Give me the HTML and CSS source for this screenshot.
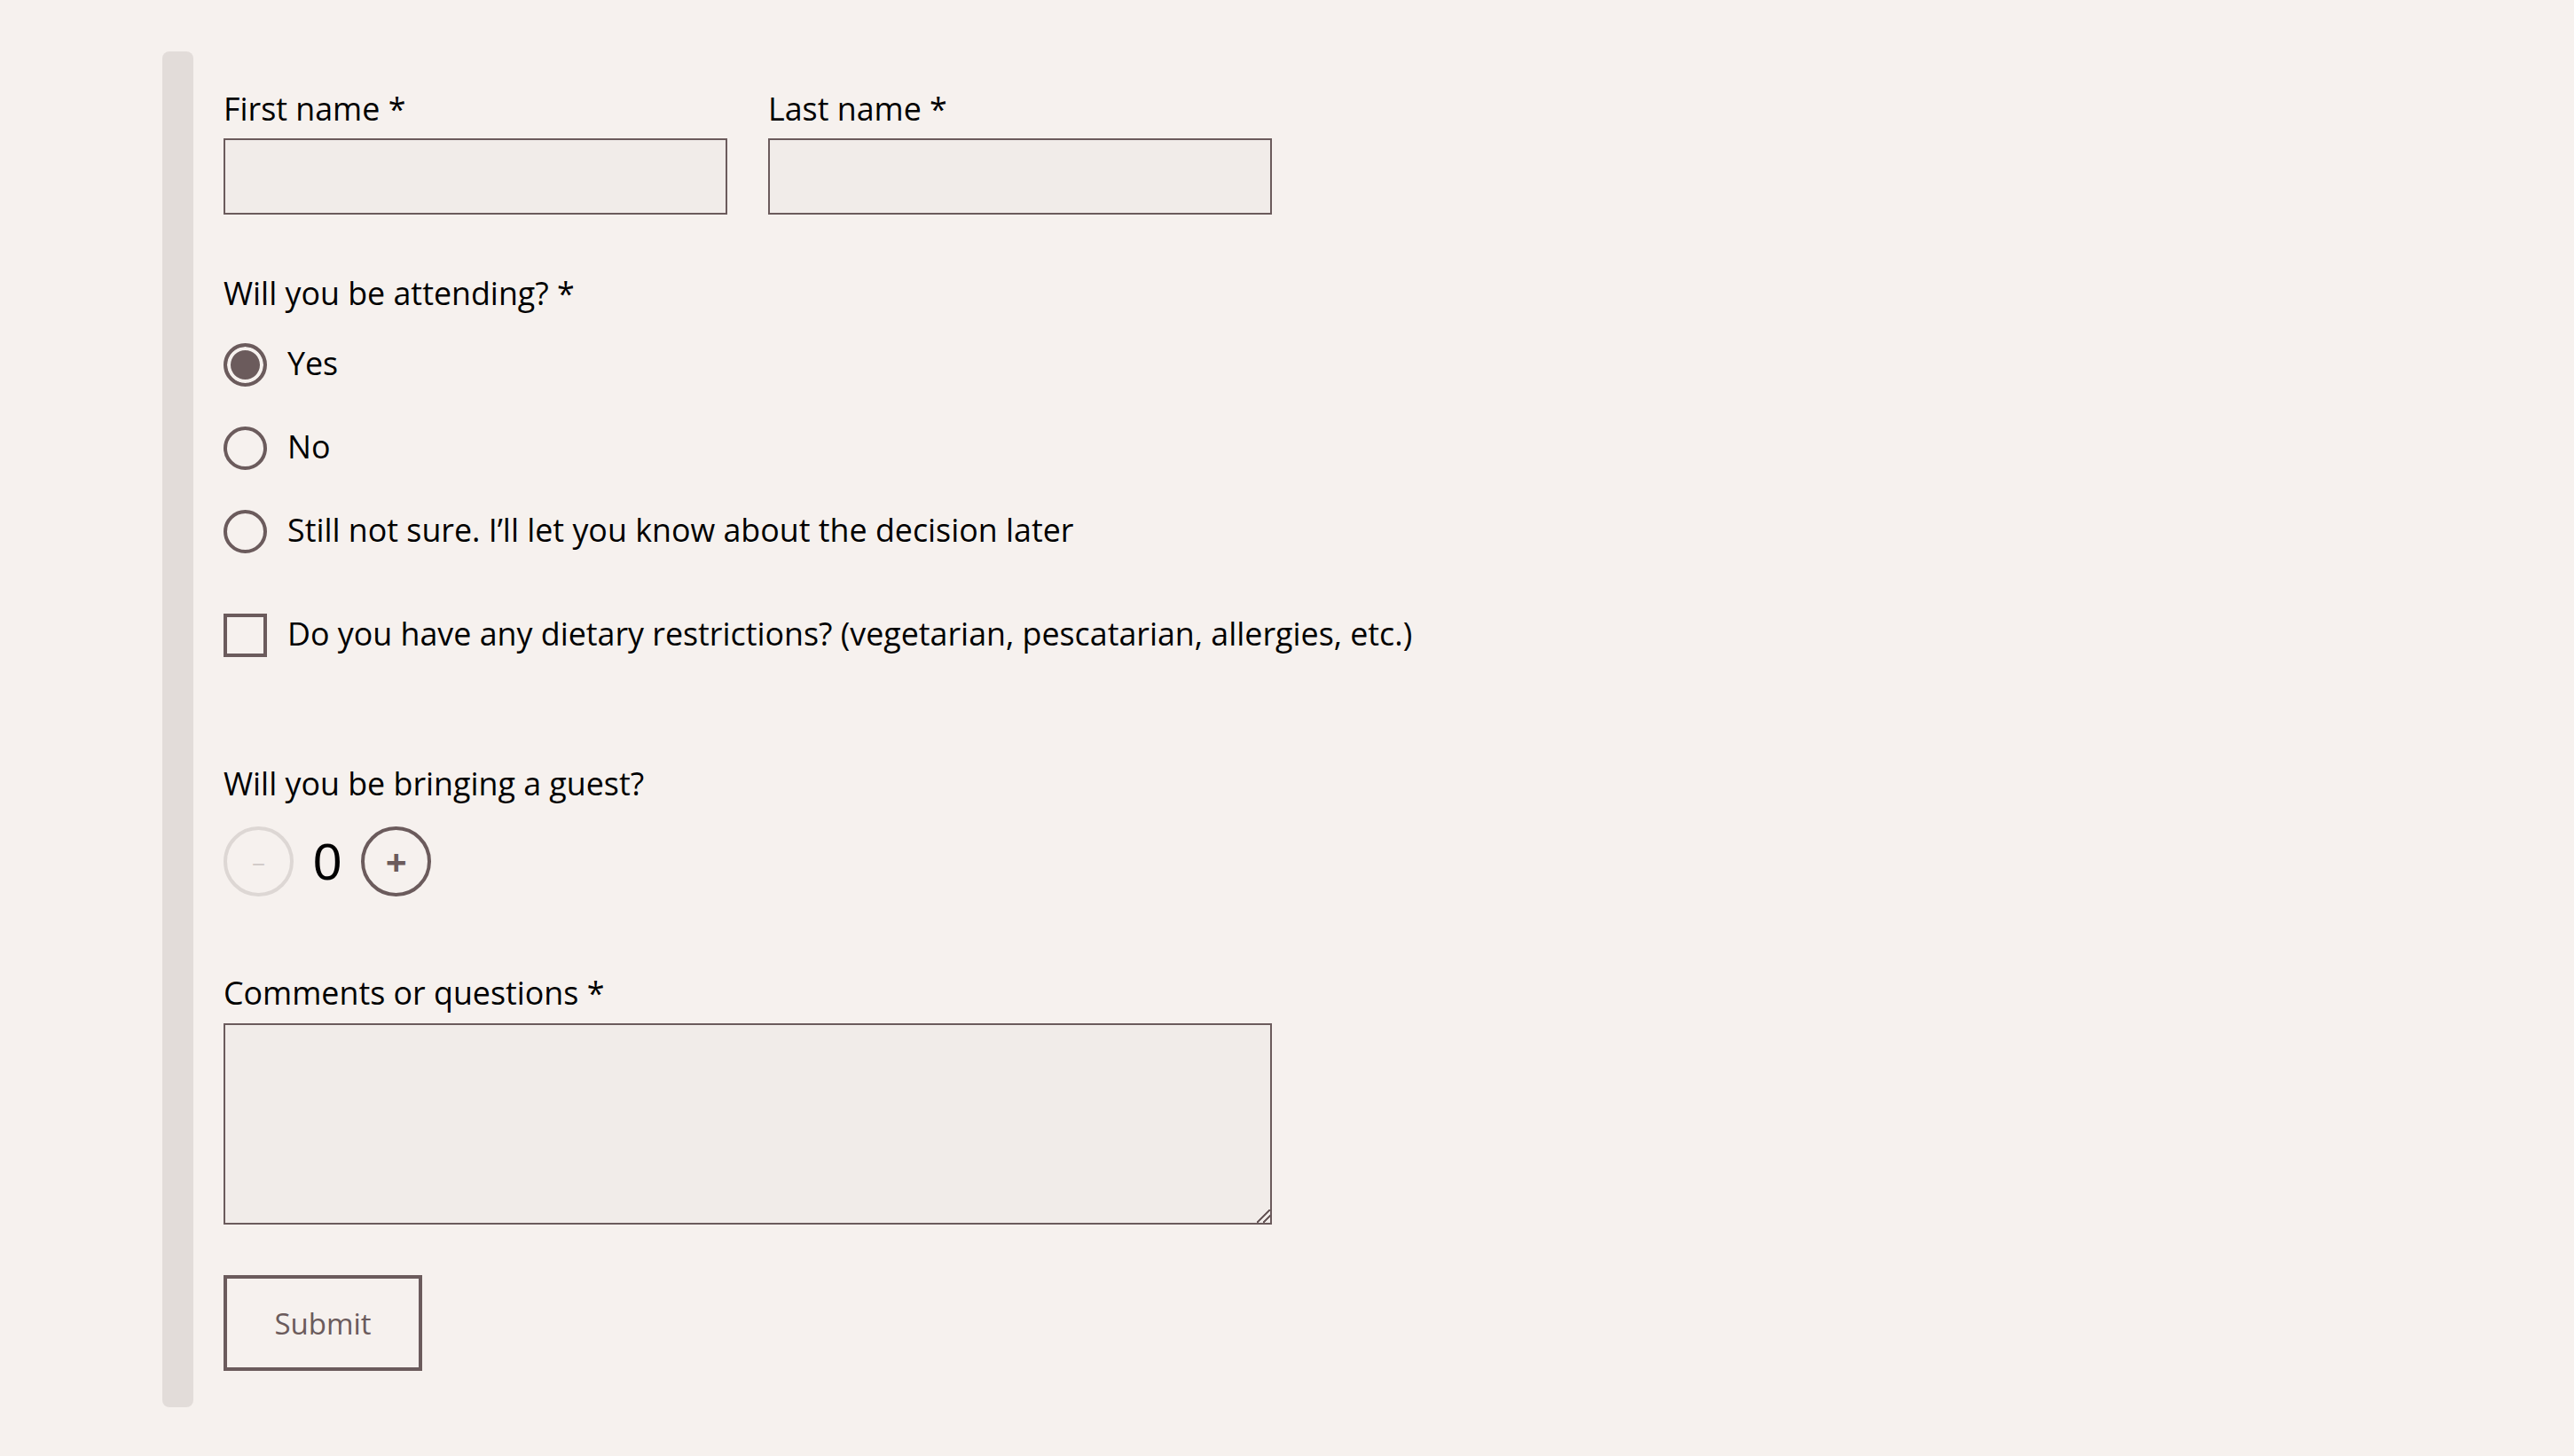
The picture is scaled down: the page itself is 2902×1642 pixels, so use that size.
FILE: index.html
```html
<!DOCTYPE html>
<html lang="en">
<head>
<meta charset="utf-8">
<title>RSVP</title>
<link rel="stylesheet" href="styles.css">
</head>
<body>
<div class="page">
  <div class="bar"></div>
  <form class="form">
    <div class="name-row">
      <div class="field">
        <label class="label" for="first">First name *</label>
        <input class="text-input" id="first" type="text">
      </div>
      <div class="field">
        <label class="label" for="last">Last name *</label>
        <input class="text-input" id="last" type="text">
      </div>
    </div>
    <div class="group attending" role="radiogroup">
      <div class="label">Will you be attending? *</div>
      <div class="radios">
        <label class="option"><input class="radio" type="radio" name="attend" checked><span class="option-text">Yes</span></label>
        <label class="option"><input class="radio" type="radio" name="attend"><span class="option-text">No</span></label>
        <label class="option"><input class="radio" type="radio" name="attend"><span class="option-text">Still not sure. I’ll let you know about the decision later</span></label>
      </div>
    </div>
    <label class="option check-option"><input class="checkbox" type="checkbox"><span class="option-text">Do you have any dietary restrictions? (vegetarian, pescatarian, allergies, etc.)</span></label>
    <div class="group guest">
      <div class="label">Will you be bringing a guest?</div>
      <div class="stepper">
        <button class="step minus" type="button" disabled>–</button>
        <span class="count">0</span>
        <button class="step plus" type="button">+</button>
      </div>
    </div>
    <div class="group comments">
      <label class="label" for="comments">Comments or questions *</label>
      <textarea class="textarea" id="comments"></textarea>
    </div>
    <button class="submit" type="submit">Submit</button>
  </form>
</div>
</body>
</html>
```

FILE: styles.css
```css
* { box-sizing: border-box; }

html, body {
  margin: 0;
  background: #f6f1ee;
}

body {
  font-family: "Open Sans", "Noto Sans", sans-serif;
  font-size: 35.8px;
  font-weight: 500;
  line-height: 44px;
  color: #000;
}

.page {
  display: flex;
  padding: 58px 0 0 183px;
}

.bar {
  width: 35px;
  background: #e2dcd9;
  border-radius: 8px;
  flex: none;
}

.form {
  display: flex;
  flex-direction: column;
  align-items: flex-start;
  width: 1216px;
  padding: 42px 0 41px 34px;
  margin: 0;
}

.label {
  display: block;
  line-height: 44px;
  margin-bottom: 12px;
}

.name-row {
  display: flex;
  gap: 46px;
}

.field {
  width: 568px;
}

.text-input {
  display: block;
  width: 100%;
  height: 86px;
  border: 2px solid #6b5b5c;
  background: #f1ece9;
  font: inherit;
  margin: 0;
  border-radius: 0;
}

.attending {
  margin-top: 66px;
}

.attending .label {
  margin-bottom: 0;
}

.radios {
  display: flex;
  flex-direction: column;
  gap: 45px;
  margin-top: 35px;
}

.option {
  display: flex;
  align-items: center;
  gap: 23px;
  height: 49px;
}

.option-text {
  line-height: 44px;
  padding-bottom: 5px;
  white-space: nowrap;
}

.radio,
.checkbox {
  appearance: none;
  -webkit-appearance: none;
  margin: 0;
  width: 49px;
  height: 49px;
  flex: none;
  border: 4px solid #6b5b5c;
  background: transparent;
}

.radio {
  border-radius: 50%;
}

.radio:checked {
  background: #6b5b5c;
  box-shadow: inset 0 0 0 4px #f6f1ee;
}

.checkbox {
  border-radius: 0;
}

.check-option {
  margin-top: 68px;
}

.guest {
  margin-top: 120px;
}

.guest .label {
  margin-bottom: 27px;
}

.stepper {
  display: flex;
  align-items: center;
  gap: 22px;
}

.step {
  width: 79px;
  height: 79px;
  border-radius: 50%;
  border: 4px solid #6b5b5c;
  background: transparent;
  color: #6b5b5c;
  font-family: "Open Sans", sans-serif;
  line-height: 1;
  padding: 0;
  display: flex;
  align-items: center;
  justify-content: center;
}

.step.minus {
  border-color: #ddd7d4;
  color: #d2cbc9;
  font-size: 30px;
}

.step.plus {
  font-size: 42px;
  font-weight: 700;
}

.count {
  font-family: "Liberation Sans", Arial, sans-serif;
  font-size: 58px;
  font-weight: 400;
  line-height: 1;
}

.comments {
  margin-top: 86px;
}

.comments .label {
  margin-bottom: 13px;
}

.textarea {
  display: block;
  width: 1182px;
  height: 227px;
  border: 2px solid #6b5b5c;
  background: #f1ece9;
  font: inherit;
  margin: 0;
  border-radius: 0;
}

.textarea::-webkit-resizer {
  background: linear-gradient(135deg, transparent 46%, #6b5b5c 46%, #6b5b5c 54%, transparent 54%, transparent 70%, #6b5b5c 70%, #6b5b5c 78%, transparent 78%);
}

.submit {
  margin-top: 57px;
  width: 224px;
  height: 108px;
  border: 4px solid #6b5b5c;
  background: transparent;
  color: #6b5b5c;
  font-family: "Open Sans", sans-serif;
  font-size: 33px;
  font-weight: 500;
  padding: 0;
}
```
